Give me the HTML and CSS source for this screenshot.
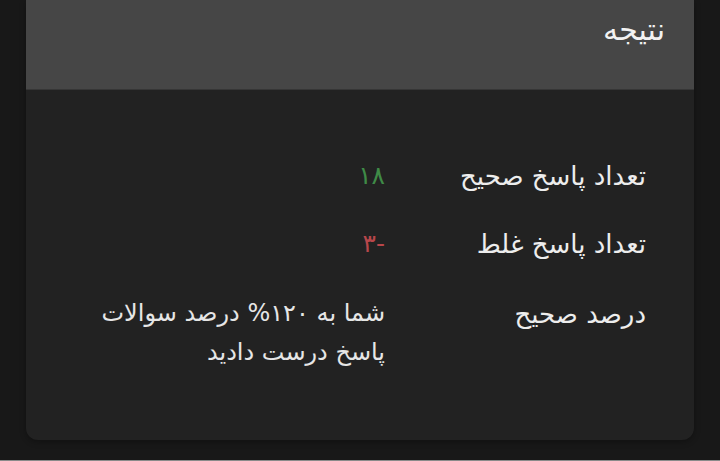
FILE: index.html
```html
<!DOCTYPE html>
<html lang="fa" dir="rtl">
<head>
    <meta charset="UTF-8">
    <meta name="viewport" content="width=device-width, initial-scale=1.0">
    <title>نتیجه</title>
    <link rel="stylesheet" href="styles.css">
</head>
<body>
    <!-- کارت نتیجه -->
    <div class="kart">
        <div class="kart-sar">
            <h2 class="onvan">نتیجه</h2>
        </div>

        <div class="kart-badane">
            <div class="radif">
                <div class="barchasb">تعداد پاسخ صحیح</div>
                <div class="meghdar sabz">۱۸</div>
            </div>
            <div class="radif">
                <div class="barchasb">تعداد پاسخ غلط</div>
                <div class="meghdar ghermez">-۳</div>
            </div>
            <div class="radif">
                <div class="barchasb">درصد صحیح</div>
                <div class="meghdar">شما به ۱۲۰% درصد سوالات<br>پاسخ درست دادید</div>
            </div>
        </div>
    </div>
</body>
</html>
```

FILE: styles.css
```css
body {
    font-family: 'DejaVu Sans', 'Noto Sans', sans-serif;
    background-color: #181818;
    margin: 0;
    padding: 0 26px;
    height: 461px;
    overflow: hidden;
    border-bottom: 1px solid #8a8a8a;
    box-sizing: border-box;
}

.kart {
    background-color: #222222;
    border-radius: 0 0 12px 12px;
    height: 440px;
    overflow: hidden;
    box-shadow: 0 2px 6px rgba(0,0,0,0.3);
}

.kart-sar {
    background-color: #464646;
    height: 90px;
    border-bottom: 1px solid #363636;
    padding: 0 29px;
    box-sizing: border-box;
}

.onvan {
    margin: 0;
    padding-top: 10px;
    color: #f2f2f2;
    font-size: 30px;
    font-weight: normal;
    line-height: 40px;
}

.kart-badane {
    padding: 66px 48px 0;
}

.radif {
    display: flex;
    margin-bottom: 28px;
}

.radif:nth-child(2) {
    margin-bottom: 30px;
}

.barchasb {
    width: 261px;
    color: #ededed;
    font-size: 26px;
    line-height: 40px;
}

.meghdar {
    color: #e6e6e6;
    font-size: 24px;
    line-height: 39px;
}

.sabz {
    color: #3f8b47;
    font-size: 25px;
}

.ghermez {
    color: #b8474b;
    font-size: 25px;
}
```
